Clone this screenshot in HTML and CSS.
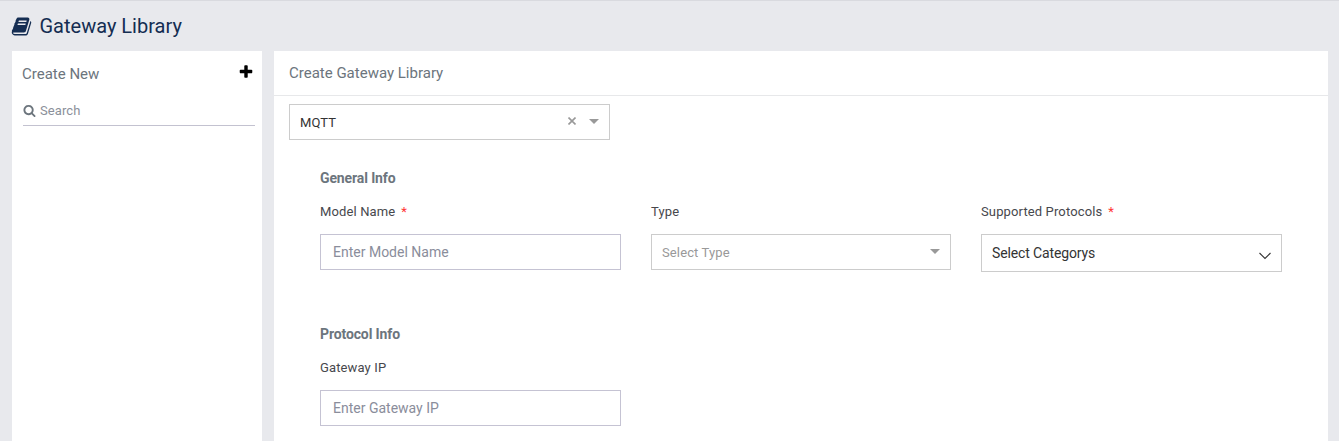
FILE: index.html
```html
<!DOCTYPE html>
<html lang="en">
<head>
<meta charset="utf-8">
<title>Gateway Library</title>
<link rel="stylesheet" href="styles.css">
</head>
<body>
<header class="page-head">
  <svg class="icon-book" viewBox="0 0 1792 1792"><path d="M1703 478q40 57 18 129l-275 906q-19 64-76.5 107.5t-122.5 43.5h-923q-77 0-148.5-53.5t-99.5-131.5q-24-67-2-127 0-4 3-27t4-37q1-8-3-21.5t-3-19.5q2-11 8-21t16.5-23.5 16.5-23.5q23-38 45-91.5t30-91.5q3-10 .5-30t-.5-28q3-11 17-28t17-23q21-36 42-92t25-90q1-9-2.5-32t.5-28q4-13 22-30.5t22-22.5q19-26 42.5-84.5t27.5-96.5q1-8-3-25.5t-2-26.5q2-8 9-18t18-23 17-21q8-12 16.5-30.5t15-35 16-36 19.5-32 26.5-23.5 36-11.5 47.5 5.5l-1 3q38-9 51-9h761q74 0 114 56t18 130l-274 906q-36 119-71.5 153.5t-128.5 34.5h-869q-27 0-38 15-11 16-1 43 24 70 144 70h923q29 0 56-15.5t35-41.5l300-987q7-22 5-57 38 15 59 43zm-1064 2q-4 13 2 22.5t20 9.5h608q13 0 25.5-9.5t16.5-22.5l21-64q4-13-2-22.5t-20-9.5h-608q-13 0-25.5 9.5t-16.5 22.5zm-83 256q-4 13 2 22.5t20 9.5h608q13 0 25.5-9.5t16.5-22.5l21-64q4-13-2-22.5t-20-9.5h-608q-13 0-25.5 9.5t-16.5 22.5z"/></svg>
  <h1 class="page-title">Gateway Library</h1>
</header>
<div class="columns">
  <aside class="sidebar">
    <div class="side-head">
      <span class="side-title">Create New</span>
      <svg class="icon-plus" viewBox="0 0 1792 1792"><path d="M1600 736v192q0 40-28 68t-68 28h-416v416q0 40-28 68t-68 28h-192q-40 0-68-28t-28-68v-416h-416q-40 0-68-28t-28-68v-192q0-40 28-68t68-28h416v-416q0-40 28-68t68-28h192q40 0 68 28t28 68v416h416q40 0 68 28t28 68z"/></svg>
    </div>
    <div class="search">
      <svg class="icon-search" viewBox="0 0 1792 1792"><path d="M1216 832q0-185-131.5-316.5t-316.5-131.5-316.5 131.5-131.5 316.5 131.5 316.5 316.5 131.5 316.5-131.5 131.5-316.5zm512 832q0 52-38 90t-90 38q-54 0-90-38l-343-342q-179 124-399 124-143 0-273.5-55.5t-225-150-150-225-55.5-273.5 55.5-273.5 150-225 225-150 273.5-55.5 273.5 55.5 225 150 150 225 55.5 273.5q0 220-124 399l343 343q37 37 37 90z"/></svg>
      <span class="search-text">Search</span>
    </div>
  </aside>
  <main class="panel">
    <h2 class="panel-head">Create Gateway Library</h2>
    <div class="box select protocol">
      <span>MQTT</span>
      <svg class="icon-clear" viewBox="0 0 8 8"><path d="M.5.5l7 7M7.5.5l-7 7"/></svg>
      <svg class="caret" viewBox="0 0 10 5"><path d="M0 0h10L5 5z"/></svg>
    </div>
    <section class="group">
      <h3 class="group-title">General Info</h3>
      <div class="fields">
        <div class="field">
          <label class="label">Model Name<span class="required">*</span></label>
          <div class="box input">Enter Model Name</div>
        </div>
        <div class="field field-type">
          <label class="label">Type</label>
          <div class="box select"><span>Select Type</span><svg class="caret" viewBox="0 0 10 5"><path d="M0 0h10L5 5z"/></svg></div>
        </div>
        <div class="field">
          <label class="label">Supported Protocols<span class="required">*</span></label>
          <div class="box multi"><span>Select Categorys</span><svg class="chevron" viewBox="0 0 12 8"><path d="M.5 1L6 6.5 11.5 1"/></svg></div>
        </div>
      </div>
    </section>
    <section class="group group-protocol">
      <h3 class="group-title">Protocol Info</h3>
      <div class="fields">
        <div class="field">
          <label class="label">Gateway IP</label>
          <div class="box input">Enter Gateway IP</div>
        </div>
      </div>
    </section>
  </main>
</div>
</body>
</html>
```
FILE: styles.css
```css
* { box-sizing: border-box; }
body {
  margin: 0;
  height: 441px;
  overflow: hidden;
  display: flex;
  flex-direction: column;
  background: #e8e9ed;
  border-top: 1px solid #d9dadf;
  font-family: Roboto, "Liberation Sans", sans-serif;
  font-size: 13px;
  color: #6c757d;
}
h1, h2, h3 { margin: 0; font-weight: 400; }
svg { display: block; flex: none; fill: currentColor; }
.page-head {
  height: 50px;
  flex: none;
  display: flex;
  align-items: center;
  padding: 0 0 0 11px;
  color: #142d52;
}
.icon-book { width: 21px; height: 21px; }
.page-title { margin-left: 7.5px; font-size: 20px; line-height: 24px; }
.columns { flex: 1; display: flex; gap: 12px; padding: 0 11px 0 12px; }
.sidebar { width: 250px; background: #fff; padding: 0 7px 0 10px; }
.side-head { height: 45px; display: flex; justify-content: space-between; font-size: 15px; line-height: 47px; }
.icon-plus { width: 16px; height: 16px; margin: 13px 1.5px 0 0; color: #000; }
.search {
  height: 30px;
  margin-left: 1px;
  border-bottom: 1px solid #c3c2d0;
  display: flex;
  align-items: center;
  color: #8b909a;
}
.icon-search { width: 13px; height: 13px; color: #6c757d; margin-right: 4px; }
.search-text { letter-spacing: .08px; }
.panel { flex: 1; background: #fff; }
.panel-head {
  height: 45px;
  border-bottom: 1px solid #e7e8ea;
  padding-left: 15px;
  font-size: 15px;
  line-height: 44px;
}
.box { height: 36px; display: flex; align-items: center; border: 1px solid #ccc; line-height: 18px; }
.select { padding: 2px 10px 0; color: #999; letter-spacing: .12px; }
.select .caret { margin-left: auto; }
.protocol { width: 321px; margin: 8px 0 0 15px; color: #333; }
.icon-clear { width: 8px; height: 8px; margin: -5px 13px 0 auto; fill: none; stroke: #999; stroke-width: 1.6; }
.caret { width: 10px; height: 5px; margin-top: -3px; color: #999; }
.protocol .caret { margin-left: 0; }
.group { padding: 28px 46px 0; }
.group-title { height: 20px; font-size: 14px; line-height: 20px; font-weight: 700; letter-spacing: -.12px; }
.fields { display: grid; grid-template-columns: repeat(3, 301px); column-gap: 29.5px; margin-top: 15px; }
.field-type { padding: 0 .5px; }
.label { display: flex; height: 18px; margin-bottom: 13px; line-height: 18px; letter-spacing: .13px; color: #47484d; }
.required { margin-left: 6px; color: #f33; }
.input { border-color: #c5c3d3; padding-left: 12px; font-size: 14px; color: #8a8d9b; }
.multi { height: 38px; padding: 0 10px; font-size: 14px; letter-spacing: -.13px; color: #333; }
.chevron { width: 12px; height: 8px; margin: 6px 0 0 auto; fill: none; stroke: #333; stroke-width: 1.1; }
.group-protocol { padding-top: 52px; }
```
